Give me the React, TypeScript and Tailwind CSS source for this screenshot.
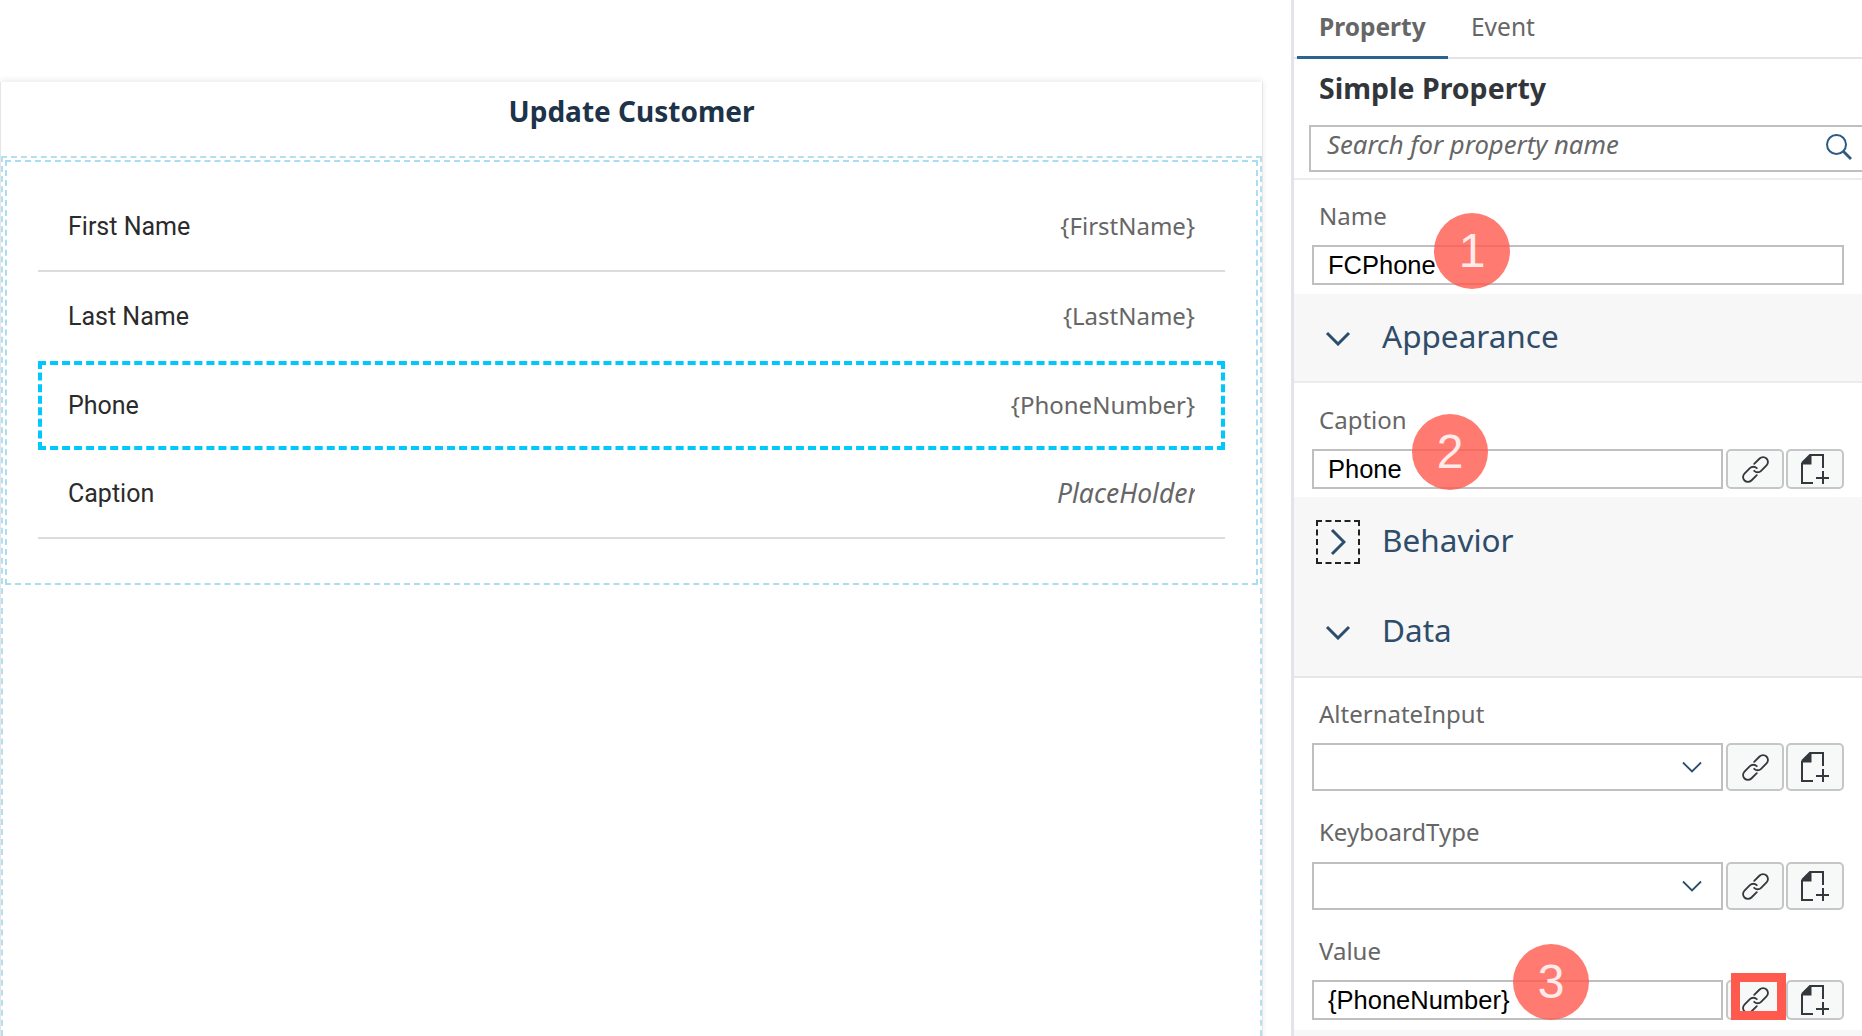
const sans = "font-['Noto_Sans',sans-serif]";

const LinkIcon = () => (
  <svg width="27" height="27" viewBox="0 0 25 25" fill="none" stroke="#33383d" strokeWidth="1.7" strokeLinecap="round">
    <path d="M11.3 7.3 L16.3 2.3 A4.5 4.5 0 0 1 22.7 8.7 L17.7 13.7 A4.5 4.5 0 0 1 11.3 13.7" />
    <path d="M13.7 17.7 L8.7 22.7 A4.5 4.5 0 0 1 2.3 16.3 L7.3 11.3 A4.5 4.5 0 0 1 13.7 11.3" />
  </svg>
);

const AddFileIcon = () => (
  <svg width="28" height="30" viewBox="0 0 28 30" fill="none" stroke="#33383d" strokeWidth="2">
    <path d="M1 9 L9 1 H22 V14 M1 9 V29 H12" />
    <path d="M1.5 9.5 L9.5 1.5 V9.5 Z" fill="#33383d" />
    <path d="M15 24 H28 M22 17 V30" />
  </svg>
);

const ChevronDown = () => (
  <svg width="26" height="16" viewBox="0 0 26 16" fill="none" stroke="#2c4e6c" strokeWidth="3">
    <path d="M2 3 L13 14 L24 3" />
  </svg>
);

const Badge = ({ n, className }: { n: string; className: string }) => (
  <div
    className={`absolute w-[76px] h-[76px] rounded-full bg-[#ff5a4d]/80 flex items-center justify-center text-[48px] text-white/85 font-['Liberation_Sans',sans-serif] ${className}`}
  >
    {n}
  </div>
);

const IconButtons = () => (
  <div className="flex gap-[2px] ml-[3px]">
    <div className="w-[58px] border-2 border-[#c4c6c8] rounded-[5px] bg-[#f7f9f9] flex items-center justify-center">
      <LinkIcon />
    </div>
    <div className="w-[58px] border-2 border-[#c4c6c8] rounded-[5px] bg-[#f7f9f9] flex items-center justify-center">
      <AddFileIcon />
    </div>
  </div>
);

const Label = ({ text, className = "" }: { text: string; className?: string }) => (
  <div className={`text-[24px] leading-[32px] text-[#666] pl-[25px] ${sans} ${className}`}>{text}</div>
);

const TextBox = ({ value, className = "" }: { value?: string; className?: string }) => (
  <div
    className={`border-2 border-[#bfbfbf] bg-white pl-[14px] flex items-center text-[25.5px] text-black font-['Liberation_Sans',sans-serif] ${className}`}
  >
    {value}
  </div>
);

const SelectBox = () => (
  <div className="flex h-[48px] ml-[18px]">
    <div className="w-[411px] border-2 border-[#bfbfbf] bg-white flex items-center justify-end pr-[19px]">
      <svg width="20" height="12" viewBox="0 0 20 12" fill="none" stroke="#2c4e6c" strokeWidth="1.8">
        <path d="M1 1.5 L10 10.5 L19 1.5" />
      </svg>
    </div>
    <IconButtons />
  </div>
);

const SectionHead = ({ text, open, className = "" }: { text: string; open: boolean; className?: string }) => (
  <div className={`flex items-center pl-[22px] ${className}`}>
    <div className="w-[44px] h-[44px] flex items-center justify-center shrink-0">
      {open ? (
        <ChevronDown />
      ) : (
        <div className="w-[44px] h-[44px] border-2 border-dashed border-[#222] flex items-center justify-center">
          <svg width="16" height="28" viewBox="0 0 16 28" fill="none" stroke="#2c4e6c" strokeWidth="3">
            <path d="M2 2 L14 14 L2 26" />
          </svg>
        </div>
      )}
    </div>
    <span className={`ml-[22px] pb-[4px] text-[31.5px] leading-[40px] text-[#2f4d6b] ${sans}`}>{text}</span>
  </div>
);

const Row = ({ label, value, selected, italic, line = true }: { label: string; value: string; selected?: boolean; italic?: boolean; line?: boolean }) => (
  <div
    className={`h-[89px] flex items-center justify-between text-[25px] font-['Roboto',sans-serif] ${
      selected ? "border-[4px] border-dashed border-[#00c8ff] px-[26px]" : line ? "border-b-2 border-[#dcdcdc] px-[30px]" : "px-[30px]"
    }`}
  >
    <span className="text-[#2b2b2b]">{label}</span>
    {italic ? (
      <span className={`w-[138px] overflow-hidden whitespace-nowrap italic text-[26.5px] text-[#666] ${sans}`}>{value}</span>
    ) : (
      <span className={`pb-[2px] text-[24px] text-[#666] ${sans}`}>{value}</span>
    )}
  </div>
);

export default function App() {
  return (
    <div className="w-[1862px] h-[1036px] overflow-hidden bg-white flex">
      {/* canvas */}
      <div className="w-[1291px] shrink-0 pt-[82px]">
        <div className="w-[1263px] h-[960px] bg-white border-x border-[#e6e6e6] shadow-[0_-2px_6px_rgba(0,0,0,0.08)]">
          <div className={`h-[74px] flex items-center justify-center pb-[17px] text-[#1d3349] text-[28px] font-bold ${sans}`}>
            Update Customer
          </div>
          <div className="h-[900px] border-t-2 border-x-2 border-[#b5dff0] border-dashed p-[2px]">
            <div className="h-[425px] border-2 border-dashed border-[#a9def0] pt-[21px] px-[31px]">
              <Row label="First Name" value="{FirstName}" />
              <Row label="Last Name" value="{LastName}" line={false} />
              <Row label="Phone" value="{PhoneNumber}" selected />
              <Row label="Caption" value="PlaceHolder" italic />
            </div>
          </div>
        </div>
      </div>

      {/* property panel */}
      <div className="relative flex-1 border-l-[3px] border-[#e3e4ea] overflow-hidden">
        <div className={`h-[59px] border-b-2 border-[#e2e4e6] flex items-start pl-[3px] text-[24.5px] ${sans}`}>
          <div className="w-[151px] h-[59px] border-b-[3px] border-[#2b6391] pl-[22px] pt-[9px] font-bold text-[#666]">Property</div>
          <div className="pl-[23px] pt-[9px] text-[#666]">Event</div>
        </div>
        <div className={`h-[58px] pl-[25px] flex items-center text-[28.5px] font-bold text-[#32363a] ${sans}`}>Simple Property</div>
        <div className="h-[63px] pt-[8px] border-b-2 border-[#ececec]">
          <div className={`ml-[15px] w-[600px] h-[47px] border-2 border-[#bfbfbf] flex items-center pl-[16px] pb-[6px] text-[25.7px] italic text-[#666] ${sans}`}>
            Search for property name
            <svg width="28" height="28" viewBox="0 0 28 28" fill="none" stroke="#2c5a80" strokeWidth="2" className="absolute left-[531px] top-[133px]">
              <circle cx="11.5" cy="11.5" r="9.5" />
              <path d="M18.5 18.5 L26 26" strokeWidth="2.8" />
            </svg>
          </div>
        </div>

        <Label text="Name" className="mt-[20px]" />
        <TextBox value="FCPhone" className="h-[40px] mt-[13px] ml-[18px] mr-[18px]" />

        <div className="mt-[9px] h-[89px] bg-[#f7f7f7] border-b-2 border-[#ececec] flex items-center">
          <SectionHead text="Appearance" open />
        </div>

        <Label text="Caption" className="mt-[21px]" />
        <div className="flex h-[40px] mt-[13px] ml-[18px]">
          <TextBox value="Phone" className="w-[411px]" />
          <IconButtons />
        </div>

        <div className="mt-[8px] h-[181px] bg-[#f7f7f7] border-b-2 border-[#e6e6e6] pt-[23px]">
          <SectionHead text="Behavior" open={false} />
          <SectionHead text="Data" open className="mt-[46px]" />
        </div>

        <Label text="AlternateInput" className="mt-[20px]" />
        <div className="mt-[13px]">
          <SelectBox />
        </div>
        <Label text="KeyboardType" className="mt-[25px]" />
        <div className="mt-[14px]">
          <SelectBox />
        </div>
        <Label text="Value" className="mt-[25px]" />
        <div className="flex h-[40px] mt-[13px] ml-[18px]">
          <TextBox value="{PhoneNumber}" className="w-[411px]" />
          <IconButtons />
        </div>
        <div className="mt-[10px] h-[10px] bg-[#f7f7f7]" />

        {/* callouts over the form */}
        <Badge n="1" className="left-[140px] top-[213px]" />
        <Badge n="2" className="left-[118px] top-[414px]" />
        <Badge n="3" className="left-[219px] top-[944px]" />
        <div className="absolute left-[437px] top-[973px] w-[55px] h-[47px] border-[9px] border-[#ff5a4d]" />
      </div>
    </div>
  );
}
